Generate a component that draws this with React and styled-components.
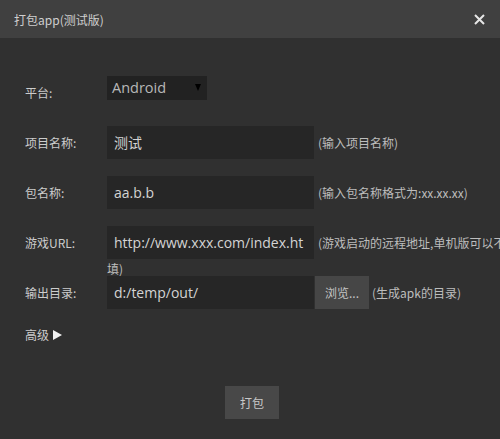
import React from "react";
import styled, { createGlobalStyle } from "styled-components";

const Global = createGlobalStyle`
  html, body { margin: 0; padding: 0; background: #303030; }
  body { font-family: "Open Sans", "Noto Sans CJK SC", sans-serif; }
  * { box-sizing: border-box; }
`;

const Dialog = styled.div`
  width: 500px;
  height: 439px;
  background: #303030;
  display: flex;
  flex-direction: column;
  overflow: hidden;
`;

const TitleBar = styled.div`
  height: 38px;
  flex: none;
  background: #404040;
  display: flex;
  align-items: center;
  justify-content: space-between;
  padding: 0 15px 0 14px;
`;

const Title = styled.span`
  font-family: "Noto Sans CJK SC", sans-serif;
  font-size: 12px;
  color: #cfcfcf;
`;

const Close = styled.button`
  border: 0;
  background: none;
  padding: 0;
  width: 11px;
  height: 11px;
  display: flex;
  cursor: pointer;
`;

const Body = styled.div`
  flex: 1;
  display: flex;
  flex-direction: column;
  padding: 38px 0 20px 25px;
`;

const Form = styled.div`
  display: grid;
  grid-template-columns: 82px 403px;
  grid-auto-rows: 50px;
`;

const Label = styled.div`
  font-family: "Noto Sans CJK SC", sans-serif;
  font-size: 12px;
  line-height: 33px;
  color: #cccccc;
  white-space: nowrap;
`;

const Field = styled.div`
  font-family: "Noto Sans CJK SC", sans-serif;
  font-size: 12px;
  line-height: 16px;
  color: #bdbdbd;
`;

const Select = styled.div`
  width: 100px;
  height: 24px;
  background: #222222;
  color: #b8b8b8;
  font-family: "Open Sans", sans-serif;
  font-size: 14.5px;
  line-height: 24px;
  padding-left: 5px;
  display: flex;
  align-items: center;
  justify-content: space-between;
  padding-right: 6px;
`;

const Arrow = styled.span`
  width: 0;
  height: 0;
  border-left: 3.5px solid transparent;
  border-right: 3.5px solid transparent;
  border-top: 7px solid #000;
  margin-top: -2px;
`;

const Input = styled.div`
  display: inline-block;
  vertical-align: middle;
  width: 207px;
  height: 33px;
  background: #262626;
  color: #d4d4d4;
  font-family: "Open Sans", "Noto Sans CJK SC", sans-serif;
  font-size: 14px;
  line-height: 33px;
  padding-left: 7px;
  white-space: nowrap;
  overflow: hidden;
`;

const Hint = styled.span`
  margin-left: ${(p) => p.$gap || 4}px;
  vertical-align: middle;
`;

const Browse = styled.button`
  display: inline-block;
  vertical-align: middle;
  margin-left: 1px;
  width: 54px;
  height: 33px;
  border: 0;
  padding: 0;
  background: #464646;
  color: #c4c4c4;
  font-family: "Noto Sans CJK SC", sans-serif;
  font-size: 12px;
`;

const Advanced = styled.div`
  font-family: "Noto Sans CJK SC", sans-serif;
  font-size: 12px;
  line-height: 18px;
  color: #cccccc;
  display: flex;
  align-items: center;
  gap: 4px;
`;

const Tri = styled.span`
  width: 0;
  height: 0;
  border-top: 5.5px solid transparent;
  border-bottom: 5.5px solid transparent;
  border-left: 9px solid #f2f2f2;
`;

const Footer = styled.div`
  margin-top: auto;
  display: flex;
  justify-content: center;
  padding-right: 21px;
`;

const PackButton = styled.button`
  width: 54px;
  height: 33px;
  border: 0;
  padding: 0;
  background: #484848;
  color: #c8c8c8;
  font-family: "Noto Sans CJK SC", sans-serif;
  font-size: 12px;
`;

export default function App() {
  return (
    <Dialog>
      <Global />
      <TitleBar>
        <Title>打包app(测试版)</Title>
        <Close aria-label="close">
          <svg width="11" height="11" viewBox="0 0 11 11">
            <path d="M1 1L10 10M10 1L1 10" stroke="#e6e6e6" strokeWidth="2" />
          </svg>
        </Close>
      </TitleBar>
      <Body>
        <Form>
          <Label>平台:</Label>
          <Field>
            <Select>
              Android
              <Arrow />
            </Select>
          </Field>

          <Label>项目名称:</Label>
          <Field>
            <Input>测试</Input>
            <Hint>(输入项目名称)</Hint>
          </Field>

          <Label>包名称:</Label>
          <Field>
            <Input>aa.b.b</Input>
            <Hint>(输入包名称格式为:xx.xx.xx)</Hint>
          </Field>

          <Label>游戏URL:</Label>
          <Field>
            <Input>http://www.xxx.com/index.ht</Input>
            <Hint>(游戏启动的远程地址,单机版可以不填)</Hint>
          </Field>

          <Label>输出目录:</Label>
          <Field>
            <Input>d:/temp/out/</Input>
            <Browse>浏览...</Browse>
            <Hint $gap={3}>(生成apk的目录)</Hint>
          </Field>
        </Form>
        <Advanced>
          高级 <Tri />
        </Advanced>
        <Footer>
          <PackButton>打包</PackButton>
        </Footer>
      </Body>
    </Dialog>
  );
}
